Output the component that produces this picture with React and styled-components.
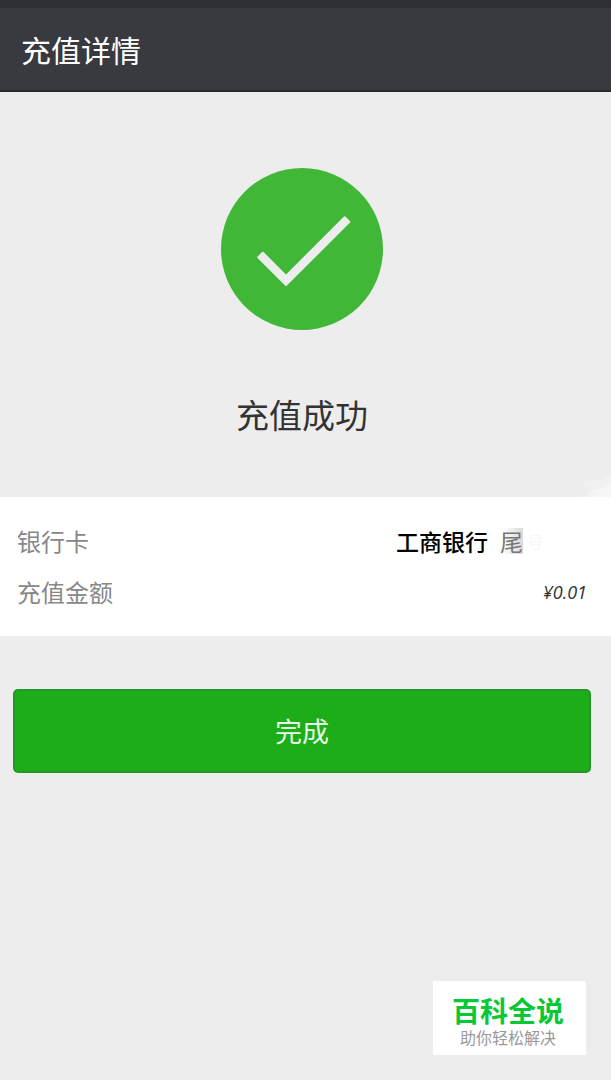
import { createGlobalStyle, styled } from "styled-components";

const details = {
	bank: "工商银行",
	tail: "尾",
	hidden: "号",
	amount: "¥0.01",
};

export default function App() {
	return (
		<>
			<GlobalStyle />
			<StyledPage>
				<StyledHeader>
					<h1>充值详情</h1>
				</StyledHeader>

				<main>
					<StyledResult>
						<CheckIcon />
						<h2>充值成功</h2>
					</StyledResult>

					<StyledDetails>
						<SmudgeIcon />
						<StyledRow>
							<dt>银行卡</dt>
							<StyledBank>
								<span>{details.bank}</span>
								<StyledTail>{details.tail}</StyledTail>
								<StyledHidden>{details.hidden}</StyledHidden>
							</StyledBank>
						</StyledRow>
						<StyledRow>
							<dt>充值金额</dt>
							<StyledAmount>{details.amount}</StyledAmount>
						</StyledRow>
					</StyledDetails>

					<StyledActions>
						<StyledButton type="button">完成</StyledButton>
					</StyledActions>
				</main>

				<StyledBadge>
					<strong>百科全说</strong>
					<span>助你轻松解决</span>
				</StyledBadge>
			</StyledPage>
		</>
	);
}

function CheckIcon() {
	return (
		<svg width="162" height="162" viewBox="0 0 162 162" aria-hidden="true">
			<circle cx="81" cy="81" r="81" fill="#41b738" />
			<path
				d="M37.2 89.3 41.8 84.7 65 107.9 123.7 49.2 128.3 53.8 65 117.1Z"
				fill="#ededed"
				stroke="#ededed"
				strokeWidth="2"
				strokeLinejoin="round"
			/>
		</svg>
	);
}

function SmudgeIcon() {
	return (
		<StyledSmudge width="32" height="22" viewBox="0 0 32 22" aria-hidden="true">
			<path
				d="M2 9 9 6 12 8 18 4 24 5 32 0V22H14L18 17 8 18 14 13Z"
				fill="#ffffff"
				opacity="0.25"
			/>
			<path d="M8 20 18 14 24 13 32 9V22H0Z" fill="#ffffff" opacity="0.35" />
		</StyledSmudge>
	);
}

const fonts = {
	text: `"Noto Sans CJK SC", sans-serif`,
	number: `"Open Sans", "Noto Sans CJK SC", sans-serif`,
};

const GlobalStyle = createGlobalStyle`
	* {
		box-sizing: border-box;
	}

	body {
		margin: 0;
		background: #ededed;
		font-family: ${fonts.text};
	}

	h1, h2, dl, dt, dd {
		margin: 0;
		font-weight: 400;
	}
`;

const StyledPage = styled.div`
	min-height: 100vh;
	background: #ededed;
`;

const StyledHeader = styled.header`
	display: flex;
	align-items: center;
	height: 92px;
	padding: 0 21px;
	border-top: 8px solid #2f3035;
	border-bottom: 2px solid #29292d;
	background: #393a3f;
	color: #ffffff;

	h1 {
		font-size: 30px;
		line-height: 40px;
	}
`;

const StyledResult = styled.section`
	display: flex;
	flex-direction: column;
	align-items: center;
	gap: 59px;
	padding: 76px 20px 58px 13px;
	color: #333333;

	svg {
		display: block;
	}

	h2 {
		font-size: 33px;
		line-height: 50px;
	}
`;

const StyledDetails = styled.dl`
	position: relative;
	display: flex;
	flex-direction: column;
	gap: 15px;
	padding: 26px 24px 26px 17px;
	background: #ffffff;
`;

const StyledSmudge = styled.svg`
	position: absolute;
	right: 0;
	bottom: 100%;
`;

const StyledRow = styled.div`
	display: flex;
	align-items: center;
	justify-content: space-between;
	height: 36px;
	font-size: 24px;
	line-height: 36px;

	dt {
		color: #888888;
	}
`;

const StyledBank = styled.dd`
	display: flex;
	align-items: center;
	padding-right: 44px;
	color: #000000;
	font-size: 23px;
	font-weight: 500;
`;

const StyledTail = styled.span`
	margin-left: 12px;
	background: linear-gradient(90deg, #ffffff 10%, #d9d9d9) center / 100% 26px
		no-repeat;
	color: #777777;
	font-weight: 400;
	line-height: 36px;
`;

const StyledHidden = styled.span`
	margin-left: 4px;
	color: #f7f7f7;
	font-size: 16px;
`;

const StyledAmount = styled.dd`
	color: #333333;
	font-family: ${fonts.number};
	font-size: 18px;
	font-style: italic;
`;

const StyledActions = styled.div`
	padding: 53px 20px 0 13px;
`;

const StyledButton = styled.button`
	display: block;
	width: 100%;
	height: 84px;
	padding: 0;
	border: 2px solid #23972a;
	border-radius: 5px;
	background: #1cad19;
	color: #e6fbe5;
	font-family: inherit;
	font-size: 27px;
	line-height: 40px;
	cursor: pointer;
`;

const StyledBadge = styled.aside`
	position: fixed;
	right: 25px;
	bottom: 25px;
	display: flex;
	flex-direction: column;
	align-items: center;
	padding: 12px 22px 8px 19px;
	background: #ffffff;

	strong {
		color: #07c935;
		font-size: 28px;
		font-weight: 700;
		line-height: 34px;
	}

	span {
		color: #999999;
		font-size: 16px;
		line-height: 20px;
	}
`;
